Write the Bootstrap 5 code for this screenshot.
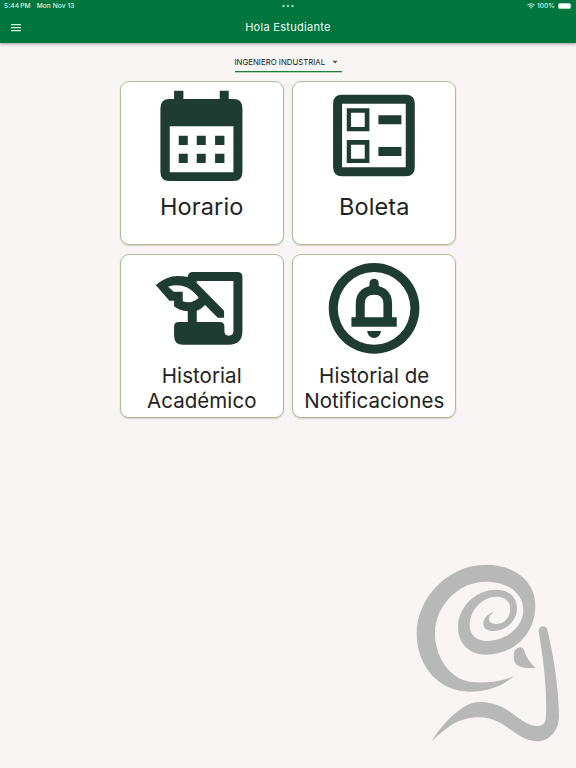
<!DOCTYPE html>
<html lang="es">
<head>
<meta charset="utf-8">
<meta name="viewport" content="width=device-width, initial-scale=1">
<title>Hola Estudiante</title>
<link href="https://cdn.jsdelivr.net/npm/bootstrap@5.3.0/dist/css/bootstrap.min.css" rel="stylesheet">
<style>
body{background:#f9f5f4;font-family:Inter,"Liberation Sans",sans-serif;color:#222}
.app-header{background:#00763f;height:43px;box-shadow:0 1px 3px rgba(0,0,0,.4);color:#f0fff4}
.status{height:12px;padding:0 4px;font-size:6.6px;line-height:12px;font-weight:500;letter-spacing:.08px;color:#dcf3e3}
.status>div{flex:1 1 0}
.status-date{margin-left:6px}
.battery-pct{margin:0 3px 0 2px}
.title-row{height:31px;padding:0 10px}
.title-row>*{flex:1 1 0}
.app-title{font-size:11px;line-height:31px;letter-spacing:.3px;font-weight:400}
.menu-btn{line-height:0;color:inherit;display:block}
.career{width:107px;height:19px;margin-top:10px;border-bottom:1px solid #198038 !important;box-shadow:0 1px 0 rgba(25,128,56,.3);font-size:7.8px;color:#222;line-height:20px;border-radius:0}
.tiles{display:grid;grid-template-columns:164px 164px;grid-auto-rows:164px;gap:8.5px;justify-content:center;margin-top:9px}
.tile{border:1px solid #b2bd98;border-radius:9px;background:#fff;box-shadow:0 1px 1.5px rgba(0,0,0,.16);text-decoration:none;color:#222}
.tile svg{width:162px;height:108px;display:block;fill:#1f3c33;flex:none}
.tile-name{font-size:23.5px;line-height:30px;letter-spacing:.12px;margin-top:2px}
.tile-name.two-line{font-size:20.5px;line-height:25px;letter-spacing:.06px;margin-top:0}
.ram{position:absolute;left:406px;top:555px;width:170px;height:200px;fill:#b9b8b9}
</style>
<script src="https://cdn.jsdelivr.net/npm/bootstrap@5.3.0/dist/js/bootstrap.bundle.min.js"></script>
</head>
<body class="vh-100 overflow-hidden position-relative">
<header class="app-header">
  <div class="status d-flex align-items-center">
    <div class="text-nowrap">5:44&#8201;PM<span class="status-date">Mon Nov 13</span></div>
    <svg width="12" height="12" viewBox="0 0 12 12" fill="#8fd3ac"><circle cx="1.5" cy="6" r="1.3"/><circle cx="6" cy="6" r="1.3"/><circle cx="10.5" cy="6" r="1.3"/></svg>
    <div class="d-flex justify-content-end align-items-center">
      <svg width="8" height="6" viewBox="0 0 16 12" fill="none" stroke="currentColor" stroke-width="2.2"><path d="M1 4.5Q8-1.5 15 4.5M3.8 7.3Q8 3.8 12.2 7.3"/><path d="M5.8 9Q8 7.5 10.2 9L8 11.5Z" fill="currentColor" stroke="none"/></svg>
      <span class="battery-pct">100%</span>
      <svg width="14" height="6" viewBox="0 0 14 6"><rect x=".3" y=".3" width="12.4" height="5.4" rx="1.5" fill="#fff" stroke="#9bd0b0" stroke-width=".5"/><path d="M13.3 2v2q.7-1 0-2" fill="#9bd0b0"/></svg>
    </div>
  </div>
  <div class="title-row d-flex align-items-center">
    <div><button class="menu-btn btn p-0 border-0" aria-label="Menú"><svg width="12" height="10" viewBox="0 0 12 10" stroke="#d8f5e0" stroke-width="1.15"><path d="M1 1.6h10M1 4.6h10M1 7.6h10"/></svg></button></div>
    <div class="app-title text-center text-nowrap">Hola Estudiante</div>
    <div></div>
  </div>
</header>
<main>
  <button class="career btn p-0 border-0 d-flex justify-content-between align-items-center mx-auto text-nowrap">
    <span>INGENIERO INDUSTRIAL</span>
    <svg class="me-1" width="6" height="4" viewBox="0 0 6 4" fill="#555"><path d="M.3.7h5.4L3 3.5Z"/></svg>
  </button>
  <div class="tiles">
    <a class="tile d-flex flex-column" href="#">
      <svg viewBox="18.75 18 486 324"><path fill-rule="evenodd" d="M178 44h28v25h109V44h27v25h14q27 0 27 28v190q0 28-27 28H164q-27 0-27-28V97q0-28 27-28h14ZM165 151v138h191V151Z"/><path d="M192 179h27v28h-27zM246 179h27v28h-27zM301 179h28v28h-28zM192 233h27v28h-27zM246 233h27v28h-27zM301 233h28v28h-28z"/></svg>
      <div class="tile-name text-center">Horario</div>
    </a>
    <a class="tile d-flex flex-column" href="#">
      <svg viewBox="15.75 18 486 324"><path fill-rule="evenodd" d="M163 56H354q27 0 27 27V274q0 27-27 27H163q-27 0-27-27V83q0-27 27-27ZM163 83V274H354V83Z"/><path fill-rule="evenodd" d="M177 97h68v69h-68zM190 110v43h41v-43ZM177 192h68v69h-68zM190 206v42h41v-42Z"/><path d="M272 118h69v27h-69zM272 213h69v27h-69z"/></svg>
      <div class="tile-name text-center">Boleta</div>
    </a>
    <a class="tile d-flex flex-column" href="#">
      <svg viewBox="18.75 21 486 324"><path fill-rule="evenodd" d="M123 111Q156 84 188 84Q208 84 219 87Q220 72 234 72H368Q383 72 383 87V249Q383 290 342 290H205Q178 290 178 263V236Q178 222 192 222H219V190Q194 189 178 175V158H164ZM246 99V105L328 188V209H309L271 171Q259 184 246 188V222H315Q329 222 329 236V249Q329 263 342 263Q356 263 356 249V99ZM160 116 177 131H204V160Q216 164 230 162Q244 158 252 149Q233 126 216 118Q189 107 160 116Z"/></svg>
      <div class="tile-name two-line text-center">Historial<br>Académico</div>
    </a>
    <a class="tile d-flex flex-column" href="#">
      <svg viewBox="15.75 21 486 324"><path fill-rule="evenodd" d="M123 181a136 136 0 1 0 272 0a136 136 0 1 0-272 0ZM150 181a109 109 0 1 1 218 0a109 109 0 1 1-218 0ZM191 208H204V167Q204 126 245 114V106a14 14 0 0 1 28 0V114Q313 126 313 167V208H327V236H191ZM231 208H287V167Q287 140 259 140Q231 140 231 167ZM238 249H280Q276 270 259 270Q242 270 238 249Z"/></svg>
      <div class="tile-name two-line text-center">Historial de<br>Notificaciones</div>
    </a>
  </div>
</main>
<svg class="ram" viewBox="0 0 510 600" aria-hidden="true">
  <path d="M323 364C270 384 225 385 190 380C130 370 87 305 87 235C87 155 155 80 240 80C305 80 352 115 352 165C352 215 300 258 245 258C210 258 191 238 191 210C191 165 230 125 272 125C298 125 313 140 313 163C313 188 292 208 270 207C255 206 248 200 249 190C250 182 256 177 263 170C243 178 231 192 232 207C233 221 246 229 265 228C302 227 333 196 333 160C333 126 308 104 270 104C208 104 156 157 156 216C156 265 190 299 240 299C320 299 388 240 388 152C388 78 325 29 240 29C125 29 32 130 32 235C32 335 100 410 190 410C240 410 285 397 323 364Z"/>
  <path d="M323 305C323 286 333 277 343 277C351 277 353 283 357 293C363 310 374 325 389 338C352 341 323 337 323 305Z"/>
  <path d="M76 560C105 512 137 480 170 458C200 439 224 438 262 446C315 459 350 512 392 513C412 513 420 505 420 480C423 400 412 310 398 230C397 210 422 208 425 229C443 305 457 390 459 480C460 527 430 559 393 559C328 557 300 488 220 487C155 487 120 519 76 560Z"/>
</svg>
</body>
</html>
